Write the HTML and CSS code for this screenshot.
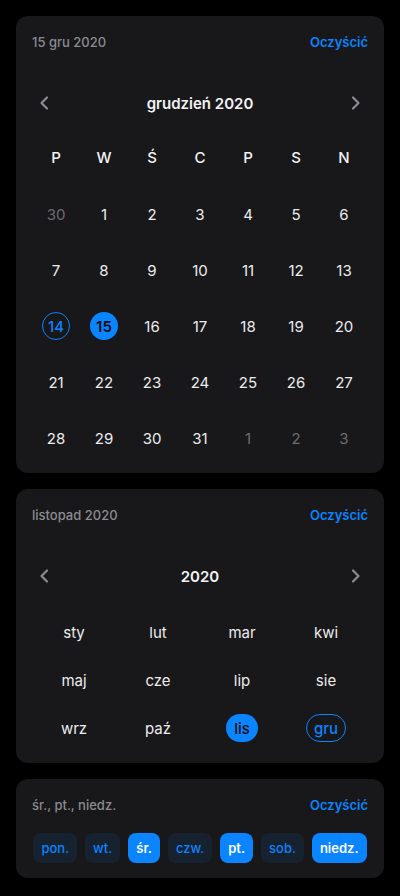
FILE: index.html
```html
<!DOCTYPE html>
<html lang="pl">
<head>
<meta charset="utf-8">
<title>Kalendarz</title>
<link rel="stylesheet" href="styles.css">
</head>
<body>
<main class="page">
  <section class="card">
    <header class="card-head">
      <span class="summary">15 gru 2020</span>
      <button class="clear">Oczyścić</button>
    </header>
    <div class="nav">
      <button class="nav-btn" aria-label="Poprzedni"><svg width="24" height="24" viewBox="0 0 24 24"><path d="M15 6.5l-5.5 5.5 5.5 5.5" fill="none" stroke="currentColor" stroke-width="2.2" stroke-linecap="round" stroke-linejoin="round"/></svg></button>
      <h2 class="nav-title">grudzień 2020</h2>
      <button class="nav-btn" aria-label="Następny"><svg width="24" height="24" viewBox="0 0 24 24"><path d="M9 6.5l5.5 5.5-5.5 5.5" fill="none" stroke="currentColor" stroke-width="2.2" stroke-linecap="round" stroke-linejoin="round"/></svg></button>
    </div>
    <div class="weekdays">
      <span>P</span><span>W</span><span>Ś</span><span>C</span><span>P</span><span>S</span><span>N</span>
    </div>
    <div class="days">
      <span class="day muted">30</span><span class="day">1</span><span class="day">2</span><span class="day">3</span><span class="day">4</span><span class="day">5</span><span class="day">6</span>
      <span class="day">7</span><span class="day">8</span><span class="day">9</span><span class="day">10</span><span class="day">11</span><span class="day">12</span><span class="day">13</span>
      <span class="day"><span class="mark outline">14</span></span><span class="day"><span class="mark filled">15</span></span><span class="day">16</span><span class="day">17</span><span class="day">18</span><span class="day">19</span><span class="day">20</span>
      <span class="day">21</span><span class="day">22</span><span class="day">23</span><span class="day">24</span><span class="day">25</span><span class="day">26</span><span class="day">27</span>
      <span class="day">28</span><span class="day">29</span><span class="day">30</span><span class="day">31</span><span class="day muted">1</span><span class="day muted">2</span><span class="day muted">3</span>
    </div>
  </section>

  <section class="card">
    <header class="card-head">
      <span class="summary">listopad 2020</span>
      <button class="clear">Oczyścić</button>
    </header>
    <div class="nav">
      <button class="nav-btn" aria-label="Poprzedni"><svg width="24" height="24" viewBox="0 0 24 24"><path d="M15 6.5l-5.5 5.5 5.5 5.5" fill="none" stroke="currentColor" stroke-width="2.2" stroke-linecap="round" stroke-linejoin="round"/></svg></button>
      <h2 class="nav-title">2020</h2>
      <button class="nav-btn" aria-label="Następny"><svg width="24" height="24" viewBox="0 0 24 24"><path d="M9 6.5l5.5 5.5-5.5 5.5" fill="none" stroke="currentColor" stroke-width="2.2" stroke-linecap="round" stroke-linejoin="round"/></svg></button>
    </div>
    <div class="months">
      <span class="month"><span class="pill">sty</span></span>
      <span class="month"><span class="pill">lut</span></span>
      <span class="month"><span class="pill">mar</span></span>
      <span class="month"><span class="pill">kwi</span></span>
      <span class="month"><span class="pill">maj</span></span>
      <span class="month"><span class="pill">cze</span></span>
      <span class="month"><span class="pill">lip</span></span>
      <span class="month"><span class="pill">sie</span></span>
      <span class="month"><span class="pill">wrz</span></span>
      <span class="month"><span class="pill">paź</span></span>
      <span class="month"><span class="pill filled">lis</span></span>
      <span class="month"><span class="pill outline">gru</span></span>
    </div>
  </section>

  <section class="card">
    <header class="card-head">
      <span class="summary">śr., pt., niedz.</span>
      <button class="clear">Oczyścić</button>
    </header>
    <div class="chips">
      <span class="chip">pon.</span>
      <span class="chip">wt.</span>
      <span class="chip on">śr.</span>
      <span class="chip">czw.</span>
      <span class="chip on">pt.</span>
      <span class="chip">sob.</span>
      <span class="chip on">niedz.</span>
    </div>
  </section>
</main>
</body>
</html>
```

FILE: styles.css
```css
* { box-sizing: border-box; }

html, body {
  margin: 0;
  background: #000;
}

body {
  font-family: Inter, "Noto Sans", "Liberation Sans", sans-serif;
  color: #ececee;
  -webkit-font-smoothing: antialiased;
}

.page {
  display: flex;
  flex-direction: column;
  gap: 16px;
  padding: 16px;
}

.card {
  background: #18181a;
  border-radius: 12px;
  padding: 16px 16px 15px;
}

.card-head {
  display: flex;
  justify-content: space-between;
  align-items: center;
  height: 20px;
}

.summary {
  font-size: 13px;
  font-weight: 500;
  color: #8b8b90;
  line-height: 20px;
}

.clear {
  background: none;
  border: 0;
  padding: 0;
  font: inherit;
  font-size: 13px;
  font-weight: 600;
  color: #0a84ff;
  line-height: 20px;
}

.nav {
  display: flex;
  align-items: center;
  justify-content: space-between;
  height: 40px;
  margin-top: 31px;
}

.nav-btn {
  width: 24px;
  height: 24px;
  padding: 0;
  border: 0;
  background: none;
  color: #8b8b90;
  display: flex;
  align-items: center;
  justify-content: center;
}

.nav-title {
  margin: 0;
  font-size: 15px;
  font-weight: 600;
  color: #f2f2f4;
}

.weekdays {
  display: grid;
  grid-template-columns: repeat(7, 1fr);
  height: 40px;
  margin-top: 14px;
  align-items: center;
  justify-items: center;
  font-size: 15px;
  font-weight: 500;
  color: #f2f2f4;
}

.days {
  display: grid;
  grid-template-columns: repeat(7, 1fr);
  grid-auto-rows: 40px;
  row-gap: 16px;
  margin-top: 17px;
  font-size: 15px;
}

.day {
  display: flex;
  align-items: center;
  justify-content: center;
  color: #ececee;
}

.day.muted { color: #6c6c70; }

.mark {
  width: 28px;
  height: 28px;
  border-radius: 50%;
  display: flex;
  align-items: center;
  justify-content: center;
  font-weight: 500;
}

.mark.outline {
  border: 1px solid #0a84ff;
  color: #0a84ff;
}

.mark.filled {
  background: #0a84ff;
  color: #0b0b0c;
  font-weight: 600;
}

.months {
  display: grid;
  grid-template-columns: repeat(4, 1fr);
  grid-auto-rows: 40px;
  row-gap: 8px;
  margin-top: 16px;
  font-size: 15px;
}

.month {
  display: flex;
  align-items: center;
  justify-content: center;
}

.pill {
  height: 28px;
  padding: 0 8px;
  border-radius: 14px;
  display: flex;
  align-items: center;
  color: #ececee;
}

.pill.filled {
  background: #0a84ff;
  color: #0b0b0c;
  font-weight: 500;
}

.pill.outline {
  border: 1px solid #0a84ff;
  color: #0a84ff;
  padding: 0 7px;
  font-weight: 500;
}

.chips {
  display: flex;
  justify-content: center;
  gap: 8px;
  margin-top: 18px;
}

.chip {
  height: 30px;
  padding: 0 8px;
  border-radius: 8px;
  display: flex;
  align-items: center;
  font-size: 13px;
  font-weight: 500;
  background: #172230;
  color: #0a84ff;
}

.chip.on {
  background: #0a84ff;
  color: #fff;
  font-weight: 600;
}
```
